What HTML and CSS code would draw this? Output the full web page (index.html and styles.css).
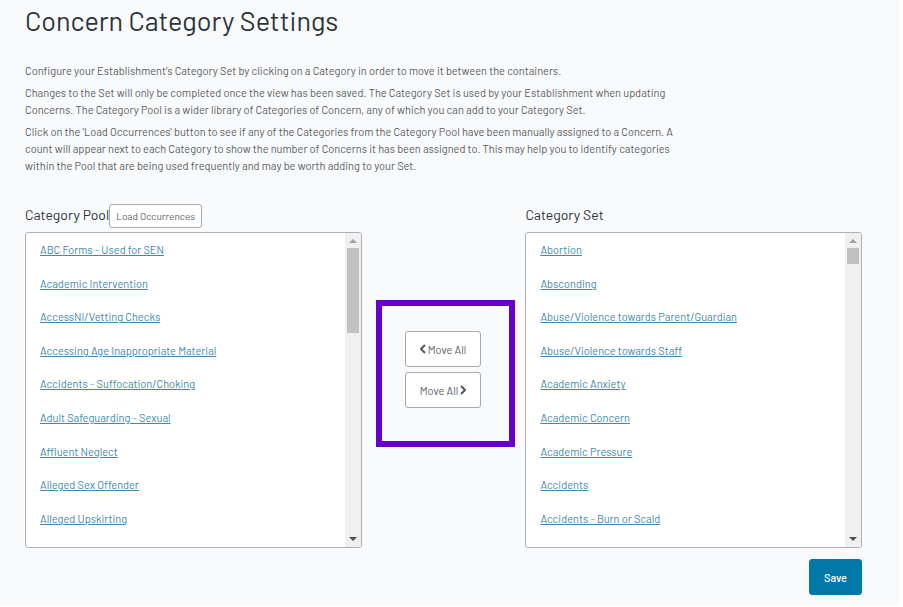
FILE: index.html
```html
<!DOCTYPE html>
<html lang="en">
<head>
<meta charset="utf-8">
<title>Concern Category Settings</title>
<link rel="stylesheet" href="styles.css">
</head>
<body>
<main class="page">
  <h1 class="title">Concern Category Settings</h1>
  <div class="intro">
    <p>Configure your Establishment's Category Set by clicking on a Category in order to move it between the containers.</p>
    <p>Changes to the Set will only be completed once the view has been saved. The Category Set is used by your Establishment when updating<br>Concerns. The Category Pool is a wider library of Categories of Concern, any of which you can add to your Category Set.</p>
    <p>Click on the 'Load Occurrences' button to see if any of the Categories from the Category Pool have been manually assigned to a Concern. A<br>count will appear next to each Category to show the number of Concerns it has been assigned to. This may help you to identify categories<br>within the Pool that are being used frequently and may be worth adding to your Set.</p>
  </div>
  <div class="columns">
    <section>
      <div class="heading"><h2>Category Pool</h2><button class="button small" type="button">Load Occurrences</button></div>
      <div class="box">
        <ul class="list">
          <li><a href="#">ABC Forms - Used for SEN</a></li>
          <li><a href="#">Academic Intervention</a></li>
          <li><a href="#">AccessNI/Vetting Checks</a></li>
          <li><a href="#">Accessing Age Inappropriate Material</a></li>
          <li><a href="#">Accidents - Suffocation/Choking</a></li>
          <li><a href="#">Adult Safeguarding - Sexual</a></li>
          <li><a href="#">Affluent Neglect</a></li>
          <li><a href="#">Alleged Sex Offender</a></li>
          <li><a href="#">Alleged Upskirting</a></li>
        </ul>
        <div class="scrollbar" aria-hidden="true"><i class="arrow up"></i><i class="thumb long"></i><i class="arrow down"></i></div>
      </div>
    </section>
    <div class="movers">
      <button class="button" type="button"><svg viewBox="0 0 6 10" aria-hidden="true"><path d="M5 1L1 5l4 4"/></svg>Move All</button>
      <button class="button" type="button">Move All<svg viewBox="0 0 6 10" aria-hidden="true"><path d="M1 1l4 4-4 4"/></svg></button>
    </div>
    <section>
      <div class="heading"><h2>Category Set</h2></div>
      <div class="box">
        <ul class="list">
          <li><a href="#">Abortion</a></li>
          <li><a href="#">Absconding</a></li>
          <li><a href="#">Abuse/Violence towards Parent/Guardian</a></li>
          <li><a href="#">Abuse/Violence towards Staff</a></li>
          <li><a href="#">Academic Anxiety</a></li>
          <li><a href="#">Academic Concern</a></li>
          <li><a href="#">Academic Pressure</a></li>
          <li><a href="#">Accidents</a></li>
          <li><a href="#">Accidents - Burn or Scald</a></li>
        </ul>
        <div class="scrollbar" aria-hidden="true"><i class="arrow up"></i><i class="thumb"></i><i class="arrow down"></i></div>
      </div>
    </section>
  </div>
  <div class="actions"><button class="button save" type="button">Save</button></div>
</main>
</body>
</html>
```
FILE: styles.css
```css
* { box-sizing: border-box; }
body {
  margin: 0;
  background: #fff;
  color: #5b5d60;
  font: 11px/17px Barlow, Roboto, "Liberation Sans", sans-serif;
}
.page {
  margin-right: 4px;
  padding: 3px 37px 10px 25px;
  background: #f9fafc;
}
h1, h2, p, ul { margin: 0; padding: 0; }
.title {
  color: #2e343e;
  font-size: 27px;
  font-weight: 400;
  line-height: 34px;
}
.intro {
  display: grid;
  gap: 5px;
  margin-top: 25px;
  white-space: nowrap;
}
.columns {
  display: grid;
  grid-template-columns: 337fr 164fr 337fr;
  margin-top: 30px;
}
.heading {
  display: flex;
  align-items: center;
  height: 28px;
}
h2 {
  color: #303338;
  font-size: 14px;
  font-weight: 400;
  line-height: 20px;
  margin-bottom: 6px;
}
.button {
  display: flex;
  align-items: center;
  justify-content: center;
  gap: 2px;
  height: 36px;
  padding: 0;
  border: 1px solid #a9a9ad;
  border-radius: 3px;
  background: #fff;
  color: #606266;
  font: inherit;
}
.button svg {
  width: 6px;
  height: 10px;
  fill: none;
  stroke: #555960;
  stroke-width: 2;
}
.small {
  height: 24px;
  margin-bottom: 4px;
  padding: 0 6px;
  font-size: 10px;
}
.box {
  display: flex;
  height: 316px;
  border: 1px solid #afafb8;
  border-radius: 3px;
  background: #fff;
  overflow: hidden;
}
.list {
  display: grid;
  grid-auto-rows: 1fr;
  align-items: center;
  flex: 1;
  padding: 0 14px 12px;
  list-style: none;
}
a {
  color: #4289ab;
  text-decoration: underline;
  text-underline-offset: 1px;
}
.scrollbar {
  display: flex;
  flex-direction: column;
  align-items: center;
  width: 16px;
  padding: 6px 0;
  background: #f0f0f0;
}
.arrow {
  border: 4px solid transparent;
}
.up {
  border-top: 0;
  border-bottom-color: #a3a3a3;
}
.down {
  margin-top: auto;
  border-bottom: 0;
  border-top-color: #505050;
}
.thumb {
  width: 12px;
  height: 16px;
  margin-top: 5px;
  background: #c1c1c1;
}
.long { height: 85px; }
.movers {
  display: grid;
  gap: 5px;
  align-self: start;
  margin: 96px 10px 0 14px;
  padding: 25px 28px 33px 23px;
  border: 6px solid #60c;
}
.actions {
  display: flex;
  justify-content: flex-end;
  margin-top: 11px;
}
.save {
  width: 53px;
  border-color: #0078a8;
  background: #0078a8;
  color: #fff;
  font-weight: 500;
}
```
